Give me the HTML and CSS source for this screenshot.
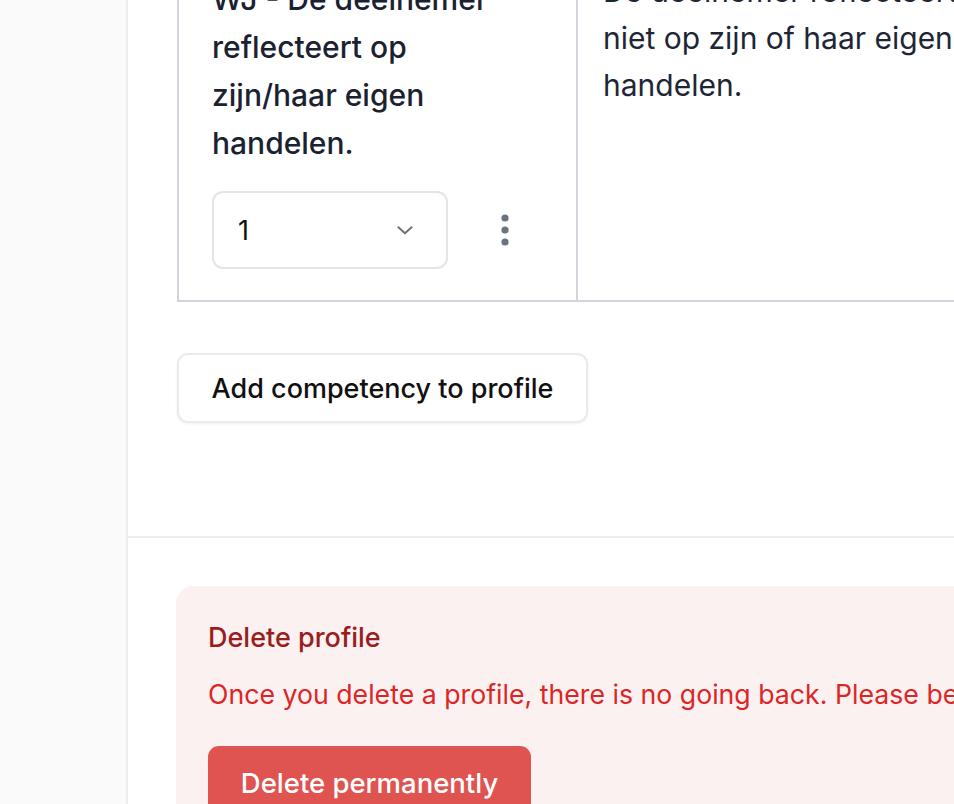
FILE: index.html
```html
<!DOCTYPE html>
<html lang="nl">
<head>
    <meta charset="UTF-8">
    <meta name="viewport" content="width=device-width, initial-scale=1.0">
    <title>Profiel bewerken</title>
    <link rel="stylesheet" href="styles.css">
</head>
<body>
    <div class="layout">
        <aside class="sidebar"></aside>
        <main class="main">
            <section class="competencies">
                <table class="competency-table">
                    <tr>
                        <td class="cell-name">
                            <p class="name">WJ - De deelnemer reflecteert op zijn/haar eigen handelen.</p>
                            <div class="level-row">
                                <div class="select">
                                    <span>1</span>
                                    <svg width="22" height="22" viewBox="0 0 20 20" fill="none" stroke="#727272" stroke-width="1.8" stroke-linecap="round" stroke-linejoin="round"><path d="M4 7.5l6 5.5 6-5.5"/></svg>
                                </div>
                                <button class="kebab" type="button" aria-label="Meer">
                                    <svg width="8" height="32" viewBox="0 0 8 32" fill="#6b7280"><circle cx="4" cy="4" r="3.6"/><circle cx="4" cy="16" r="3.6"/><circle cx="4" cy="28" r="3.6"/></svg>
                                </button>
                            </div>
                        </td>
                        <td class="cell-desc">
                            <p class="desc">De deelnemer reflecteert niet op zijn of haar eigen handelen.</p>
                        </td>
                    </tr>
                </table>
                <button class="btn-secondary" type="button">Add competency to profile</button>
            </section>

            <section class="danger-section">
                <div class="danger-box">
                    <h3>Delete profile</h3>
                    <p>Once you delete a profile, there is no going back. Please be certain.</p>
                    <button class="btn-danger" type="button">Delete permanently</button>
                </div>
            </section>
        </main>
    </div>
</body>
</html>
```

FILE: styles.css
```css
html, body {
    margin: 0;
    height: 100%;
    overflow: hidden;
}
body {
    font-family: Inter, "Noto Sans", sans-serif;
    background-color: #ffffff;
    color: #111827;
}
.layout {
    display: flex;
    min-height: 100vh;
}
.sidebar {
    width: 126px;
    flex-shrink: 0;
    background-color: #fafafa;
    border-right: 2px solid #ededed;
}
.main {
    flex: 1;
    min-width: 0;
}
.competencies {
    padding: 0 0 113px 49px;
    border-bottom: 2px solid #ededed;
}
.competency-table {
    margin-top: -60px;
    border-collapse: collapse;
    table-layout: fixed;
    width: 810px;
}
.competency-table td {
    border: 2px solid #d1d5db;
    vertical-align: top;
}
.cell-name {
    width: 332px;
    padding: 33px 32px 31px 33px;
}
.cell-desc {
    padding: 26px 24px 0 25px;
}
.name {
    margin: 0;
    width: 300px;
    font-size: 30px;
    line-height: 48px;
    font-weight: 500;
    color: #1a2231;
}
.desc {
    margin: 0;
    width: 362px;
    font-size: 30px;
    line-height: 47px;
    color: #1e2635;
}
.level-row {
    margin-top: 24px;
    display: flex;
    align-items: center;
    gap: 53px;
}
.select {
    width: 236px;
    height: 78px;
    box-sizing: border-box;
    border: 2px solid #e5e5e5;
    border-radius: 11px;
    display: flex;
    align-items: center;
    justify-content: space-between;
    padding: 0 30px 0 24px;
    font-size: 27px;
    color: #111;
}
.kebab {
    background: none;
    border: none;
    padding: 0;
    display: flex;
}
.btn-secondary {
    margin-top: 51px;
    width: 411px;
    height: 70px;
    background-color: #fff;
    border: 2px solid #ebebeb;
    border-radius: 11px;
    box-shadow: 0 1px 3px rgba(0, 0, 0, 0.06);
    font-family: inherit;
    font-size: 27px;
    font-weight: 500;
    color: #111;
}
.danger-section {
    padding: 48px 0 0 48px;
}
.danger-box {
    background-color: #fbf1f1;
    border-radius: 18px 0 0 0;
    padding: 34px 32px 0 32px;
    height: 300px;
    white-space: nowrap;
}
.danger-box h3 {
    margin: 0;
    font-size: 27px;
    line-height: 36px;
    font-weight: 500;
    color: #9b1c1c;
}
.danger-box p {
    margin: 20px 0 0 0;
    font-size: 26.7px;
    line-height: 36px;
    color: #dc2626;
}
.btn-danger {
    margin-top: 34px;
    width: 323px;
    height: 74px;
    background-color: #df5450;
    border: none;
    border-radius: 11px;
    font-family: inherit;
    font-size: 27.5px;
    font-weight: 500;
    color: #fff;
}
```
